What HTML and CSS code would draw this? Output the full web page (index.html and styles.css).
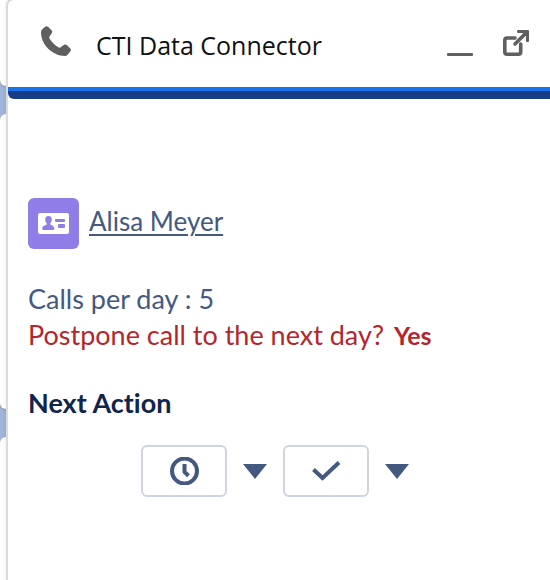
FILE: index.html
```html
<!DOCTYPE html>
<html lang="en">
<head>
<meta charset="utf-8">
<title>CTI Data Connector</title>
<link rel="stylesheet" href="styles.css">
</head>
<body>
<div class="backdrop" aria-hidden="true">
  <div class="tile tile-top"></div>
  <div class="tile tile-middle"></div>
  <div class="tile tile-bottom"></div>
</div>
<main class="panel">
  <header class="header">
    <svg class="phone" viewBox="0 0 30 30" aria-hidden="true"><path d="M4 .8Q5.500 -.3 7 .8L10.800 4.500Q11.700 5.500 11 6.800L8.500 10.500Q8 11.500 8.500 12.500C10.500 16 14 19.500 17.800 21.500Q19 22 20 21L23 18.800Q24.500 18 25.800 19L29.300 22.500Q30.500 24 29.500 25.200L26.500 28.700Q25.500 30 24 30C12 30 0 19 0 6.500Q0 4.500 1 3.500Z"/></svg>
    <h1 class="title">CTI Data Connector</h1>
    <button class="tool" type="button" aria-label="Minimize"><svg viewBox="0 0 26 26" aria-hidden="true"><rect y="23" width="26" height="3" rx="1"/></svg></button>
    <button class="tool" type="button" aria-label="Pop out"><svg viewBox="0 0 26 26" aria-hidden="true"><path class="line" d="M12 8H4Q1.800 8 1.800 10.200V22Q1.800 24.200 4 24.200H15.500Q17.700 24.200 17.700 22V14"/><path class="line" d="M12 14L22 4"/><path d="M14.500 0H25Q26 0 26 1V11.500Q24.500 12.500 23 11.500V6.500L19.500 3H14.500Q13.500 1.500 14.500 0Z"/></svg></button>
  </header>
  <section class="content">
    <div class="contact">
      <svg class="badge" viewBox="0 0 51 51" aria-hidden="true"><rect class="badge-bg" width="51" height="51" rx="6"/><rect class="badge-card" x="10" y="15" width="31" height="21" rx="2"/><path class="badge-bg" d="M20.500 18C22.800 18 24 19.600 23.800 21.800Q23.600 24 22.300 25.200V26.500L25 28Q26.500 29 26.300 31Q26.200 32 25 32H15.500Q14.200 32 14.200 31Q14.200 29 15.500 28L18.700 26.500V25.200Q17.300 24 17.200 21.800C17.100 19.600 18.200 18 20.500 18Z"/><rect class="badge-bg" x="27" y="21" width="10" height="3" rx="1"/><rect class="badge-bg" x="30" y="26" width="7" height="4" rx="1"/></svg>
      <a class="name" href="#contact">Alisa Meyer</a>
    </div>
    <p class="line-text">Calls per day : 5</p>
    <p class="line-text alert">Postpone call to the next day? <strong class="answer">Yes</strong></p>
    <h2 class="subtitle">Next Action</h2>
    <div class="actions">
      <button class="action" type="button" aria-label="Schedule"><svg class="clock" viewBox="0 0 30 28" aria-hidden="true"><circle cx="15.500" cy="14" r="12.500"/><path d="M15.500 7V15L19.500 18.800"/></svg></button>
      <button class="more" type="button" aria-label="Schedule options"><svg viewBox="0 0 24 15" aria-hidden="true"><path d="M0 0H24L12 15Z"/></svg></button>
      <button class="action" type="button" aria-label="Complete"><svg class="check" viewBox="0 0 30 20" aria-hidden="true"><path d="M2.500 8.500L11.500 17L28 1.500"/></svg></button>
      <button class="more" type="button" aria-label="Complete options"><svg viewBox="0 0 24 15" aria-hidden="true"><path d="M0 0H24L12 15Z"/></svg></button>
    </div>
  </section>
</main>
</body>
</html>
```
FILE: styles.css
```css
* {
  box-sizing: border-box;
}

body {
  margin: 0;
  min-height: 100vh;
  display: flex;
  background: #9fb4d8;
  color: #44597f;
  font-family: Lato, "Open Sans", sans-serif;
  font-variant-ligatures: none;
}

.backdrop {
  width: 8px;
  display: flex;
  flex-direction: column;
  gap: 28px;
}

.tile {
  background: #fff;
  box-shadow: 0 1px 2px #999;
}

.tile-top {
  height: 86px;
  border-radius: 0 0 0 6px;
}

.tile-middle {
  height: 295px;
  border-radius: 6px 0 0 6px;
}

.tile-bottom {
  flex: 1;
  border-radius: 6px 0 0 0;
}

.panel {
  position: relative;
  flex: 1;
  min-width: 0;
  background: #fff;
  border-radius: 6px 0 0 0;
  box-shadow: 0 0 0 2px #dbdbdb, 0 0 5px rgba(0, 0, 0, 0.25);
}

.header {
  display: flex;
  align-items: center;
  height: 99px;
  padding: 0 21px 10px 33px;
  border-bottom: 8px solid #183d86;
  box-shadow: inset 0 -4px #1873ec;
  border-radius: 6px 0 0 6px;
}

.phone {
  width: 30px;
  height: 30px;
  margin-right: 25px;
  fill: #606060;
}

.title {
  flex: 1;
  margin: 0;
  padding-top: 8px;
  color: #111;
  font: 400 25px/36px "Open Sans", sans-serif;
  white-space: nowrap;
}

button {
  display: flex;
  align-items: center;
  justify-content: center;
  padding: 0;
  border: 0;
  background: none;
  cursor: pointer;
}

.tool {
  margin-left: 30px;
}

.tool svg {
  width: 26px;
  height: 26px;
  margin-top: 4px;
  fill: #606060;
}

.tool .line {
  fill: none;
  stroke: #606060;
  stroke-width: 3.6;
  stroke-linecap: round;
}

.content {
  padding: 99px 20px 0;
}

.contact {
  display: flex;
  align-items: center;
  gap: 10px;
  margin-bottom: 32px;
}

.badge {
  width: 51px;
  height: 51px;
}

.badge-bg {
  fill: #917de7;
}

.badge-card {
  fill: #fff;
}

.name {
  padding-bottom: 6px;
  color: #44597f;
  font-size: 26px;
  line-height: 36px;
  text-decoration-thickness: 2px;
  text-underline-offset: 3px;
}

.line-text {
  margin: 0;
  font-size: 27px;
  line-height: 36px;
}

.alert {
  color: #b4262c;
}

.answer {
  margin-left: 3px;
  font-size: 25px;
}

.subtitle {
  margin: 32px 0 24px;
  color: #10244c;
  font-size: 27px;
  line-height: 36px;
}

.actions {
  display: flex;
  align-items: center;
  gap: 16px;
  padding-left: 113px;
}

.action {
  width: 86px;
  height: 52px;
  border: 2px solid #ced4e2;
  border-radius: 6px;
}

.action svg {
  width: 30px;
  fill: none;
  stroke: #44597f;
  stroke-width: 4;
}

.clock {
  height: 28px;
}

.check {
  height: 20px;
}

.more svg {
  width: 24px;
  height: 15px;
  fill: #44597f;
}
```
